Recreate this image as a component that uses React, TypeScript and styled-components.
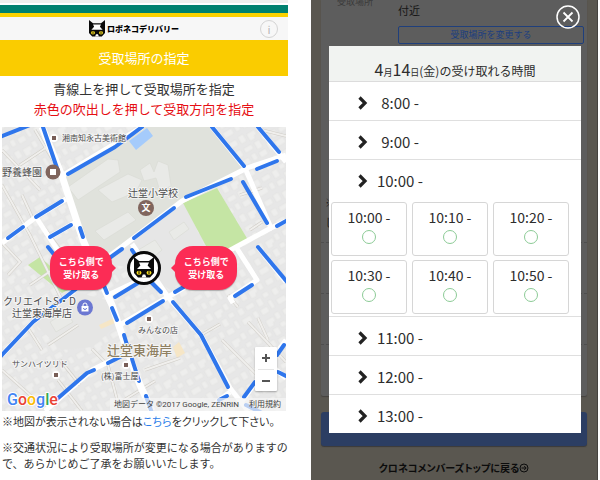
import React from "react";
import styled, { createGlobalStyle } from "styled-components";

const GlobalStyle = createGlobalStyle`
  *, *::before, *::after { box-sizing: border-box; }
  body {
    margin: 0;
    background: #fff;
    color: #333;
    font-family: "Noto Sans CJK JP", "Noto Sans", sans-serif;
  }
  button { font: inherit; color: inherit; padding: 0; margin: 0; cursor: pointer; }
  h1, h2, p, ul { margin: 0; padding: 0; font-weight: 400; }
`;

const Page = styled.main`
  display: grid;
  grid-template-columns: 288fr 287fr;
  column-gap: 23px;
  padding-right: 2px;
  min-height: 100vh;
`;

/* ---------- pick-up place screen ---------- */

const PlaceScreen = styled.section`
  min-width: 0;
`;

const Strip = styled.div<{ $color: string; $size: number }>`
  height: ${(p) => p.$size}px;
  background: ${(p) => p.$color};
`;

const BrandBar = styled.header`
  display: grid;
  grid-template-columns: 1fr auto 1fr;
  align-items: center;
  height: 23px;
  padding: 0 10px;
  background: #f7f7f7;
`;

const Brand = styled.div`
  grid-column: 2;
  display: flex;
  align-items: center;
  gap: 2px;
  padding-right: 20px;
  color: #000;
  font-size: 8px;
  font-weight: 900;
  line-height: 12px;
`;

const InfoButton = styled.button`
  justify-self: end;
  width: 18px;
  height: 18px;
  border: 1px solid #d4d4d4;
  border-radius: 50%;
  background: transparent;
  color: #b5b5b5;
  font-size: 11px;
  line-height: 14px;
`;

const ScreenTitle = styled.h1`
  background: #facc00;
  color: #fff;
  font-size: 13px;
  line-height: 36px;
  text-align: center;
`;

const Guide = styled.div`
  padding: 3px 0 8px;
  text-align: center;
  font-size: 13px;
  line-height: 20px;
`;

const GuideLine = styled.p<{ $alert?: boolean }>`
  color: ${(p) => (p.$alert ? "#e60f14" : "#333")};
`;

const MapBox = styled.div`
  position: relative;
  margin: 0 2px;
  aspect-ratio: 1;
  overflow: hidden;
  background: #e9e9e8;
`;

const MapDrawing = styled.svg`
  display: block;
  width: 100%;
  height: 100%;
`;

const Bubble = styled.button<{ $tail: "left" | "right" }>`
  position: absolute;
  top: 42%;
  left: ${(p) => (p.$tail === "right" ? "17%" : "61%")};
  width: 62px;
  height: 44px;
  border: 0;
  border-radius: 18px;
  background: #fc2c55;
  color: #fff;
  font-size: 9px;
  font-weight: 700;
  line-height: 13px;
  box-shadow: 0 1px 1px rgba(0, 0, 0, 0.25);

  &::after {
    content: "";
    position: absolute;
    top: 17px;
    ${(p) => (p.$tail === "right" ? "left: 100%;" : "right: 100%;")}
    margin: 0 -1px;
    border: 5px solid transparent;
    ${(p) =>
      p.$tail === "right"
        ? "border-left-color: #fc2c55; border-right-width: 0;"
        : "border-right-color: #fc2c55; border-left-width: 0;"}
  }
`;

const ZoomControl = styled.div`
  position: absolute;
  right: 9px;
  bottom: 20px;
  width: 22px;
  padding: 0 3px;
  border-radius: 1px;
  background: #fff;
  box-shadow: 0 1px 2px rgba(0, 0, 0, 0.3);
`;

const ZoomButton = styled.button`
  display: flex;
  align-items: center;
  justify-content: center;
  width: 100%;
  height: 22px;
  border: 0;
  background: none;

  & + & { border-top: 1px solid #e6e6e6; }
`;

const Credit = styled.div`
  position: absolute;
  right: 0;
  bottom: 0;
  display: flex;
  gap: 10px;
  padding: 0 5px 0 4px;
  background: rgba(245, 245, 245, 0.7);
  color: #444;
  font-family: Roboto, "Noto Sans CJK JP", sans-serif;
  font-size: 8px;
  line-height: 13px;
  white-space: nowrap;
`;

const CreditLink = styled.a`
  color: inherit;
  text-decoration: none;
`;

const Notes = styled.div`
  display: grid;
  gap: 10px;
  padding: 2px 0 0 2px;
  font-size: 11px;
  line-height: 16px;
  white-space: nowrap;
`;

const Note = styled.p<{ $compact?: boolean }>`
  font-feature-settings: ${(p) => (p.$compact ? '"palt"' : "normal")};
`;

const InlineLink = styled.a`
  color: #2b7de9;
  text-decoration: none;
`;

/* ---------- pick-up time screen ---------- */

const TimeScreen = styled.section`
  position: relative;
  display: flex;
  flex-direction: column;
  min-width: 0;
  padding: 0 10px 4px;
  overflow: hidden;
  background: #5a5750;
  border-right: 1px solid #45433f;
`;

const Sheet = styled.div`
  height: 396px;
  background: #5d5d5d;
  border-radius: 0 0 2px 2px;
  box-shadow: 0 1px 1px #45433f;
`;

const SheetPlace = styled.div`
  display: grid;
  grid-template-columns: 61px 1fr;
  column-gap: 16px;
  height: 192px;
  padding-right: 3px;
  align-content: start;
`;

const SheetLabel = styled.div`
  padding-left: 16px;
  color: #3a3a3a;
  font-size: 9px;
  line-height: 4px;
  white-space: nowrap;
`;

const SheetValue = styled.div`
  color: #161616;
  font-size: 11px;
  line-height: 20px;
`;

const ChangeButton = styled.button`
  display: block;
  width: 100%;
  height: 18px;
  margin-top: 6px;
  border: 1px solid #1f3f7c;
  border-radius: 2px;
  background: none;
  color: #1b3d80;
  font-size: 9px;
  line-height: 14px;
`;

const SheetRow = styled.div`
  height: 51px;
  padding-left: 4px;
  border-bottom: 1px dashed #4e4e4e;
  color: #202020;
  font-size: 11px;
  line-height: 20px;
`;

const SubmitButton = styled.button`
  height: 34px;
  margin-top: 16px;
  border: 0;
  border-radius: 3px;
  background: #2c3e63;
  color: #77756f;
  font-size: 13px;
  line-height: 20px;
  padding-bottom: 8px;
  box-shadow: 0 1px 1px #3a3a3a;
`;

const BackLink = styled.a`
  display: flex;
  align-items: center;
  justify-content: center;
  margin-top: 13px;
  color: #0c0c0c;
  font-size: 10px;
  font-weight: 700;
  line-height: 18px;
  font-feature-settings: "palt";
  text-decoration: none;
`;

const CloseButton = styled.button`
  position: absolute;
  top: 5px;
  right: 17px;
  width: 24px;
  height: 24px;
  border: 0;
  background: none;
`;

const Dialog = styled.div`
  position: absolute;
  top: 46px;
  left: 18px;
  right: 16px;
  background: #fff;
  color: #2d2d2d;
`;

const DialogTitle = styled.h2`
  display: flex;
  align-items: baseline;
  justify-content: center;
  padding: 12px 0 0;
  height: 36px;
  background: #f1f3f1;
  border-bottom: 1px solid #dcdcdc;
  font-size: 12px;
  line-height: 23px;
  white-space: nowrap;
`;

const Big = styled.span`
  font-size: 16px;
`;

const Small = styled.span`
  font-size: 9px;
`;

const HourButton = styled.button`
  display: flex;
  align-items: center;
  width: 100%;
  height: 38px;
  padding: 4px 0 0 28px;
  border: 0;
  background: none;
  font-size: 15px;
  line-height: 20px;
`;

const HourText = styled.span`
  width: 50px;
  margin-left: 6px;
  text-align: center;
`;

const Hour = styled.li`
  list-style: none;

  & + & { border-top: 1px solid #dfdfdf; }
`;

const Slots = styled.div`
  display: grid;
  grid-template-columns: repeat(3, 1fr);
  gap: 4px 5px;
  padding: 4px 12px 2px 2px;
`;

const Slot = styled.button`
  display: flex;
  flex-direction: column;
  align-items: center;
  gap: 3px;
  height: 54px;
  padding: 4px 0 0;
  border: 1px solid #d6d6d6;
  border-radius: 3px;
  background: #fff;
  font-size: 14px;
  line-height: 20px;
`;

const Free = styled.span`
  width: 14px;
  height: 14px;
  border: 1px solid #8ccb96;
  border-radius: 50%;
`;

/* ---------- drawings ---------- */

const CatFace = () => (
  <>
    <path d="M0 0L5 4H15L20 0V16L16 20.5H4L0 16Z" fill="#0a0a0a" />
    <path d="M5 5.6H15L13.6 8.4L17 12H3L6.400 8.400Z" fill="#fff" />
    <path d="M8.8 17.6H11.2L12.4 20.6H7.6Z" fill="#fff" />
    <ellipse cx="5" cy="15.8" rx="2.5" ry="2.1" fill="#f6dc1e" />
    <ellipse cx="15" cy="15.8" rx="2.5" ry="2.1" fill="#f6dc1e" />
    <path d="M5 14v3.400M15 14v3.400" stroke="#0a0a0a" strokeWidth="1" />
  </>
);

const Chevron = () => (
  <svg width="12" height="14" viewBox="0 0 12 14" aria-hidden="true">
    <path d="M2.5 1.5L8 7L2.5 12.5" fill="none" stroke="#222" strokeWidth="3.2" />
  </svg>
);

const minorRoads = [
  "M2 185L30 235L62 300", "M22 195L34 221", "M2 243L20 262L8 275", "M36 217L62 252", "M60 172L35 130",
  "M28 328L42 350", "M2 370L48 411", "M48 345L78 325", "M58 380L82 411", "M92 349L108 365L120 411",
  "M201 335L220 324", "M145 370L180 358", "M248 322L286 362", "M258 318L268 340", "M222 340L262 380",
  "M240 195L262 188", "M262 130L286 136", "M250 230L262 222", "M124 400L155 381", "M80 385L60 360",
  "M228 295L238 307", "M20 165L50 145", "M2 150L40 190", "M30 285L52 270",
];

const roads = [
  "M2 243L36 217L66 199", "M36 217L60 254", "M50 237L76 222", "M62 176L142 127", "M90 271L182 201L247 168L286 155",
  "M212 127L245 168L271 228L286 221", "M258 127L286 162", "M271 228L212 260", "M236 247L257 280L230 298L233 303",
  "M132 244L168 297L201 335L230 388L248 411", "M108 295L146 277", "M118 326L168 297L190 284",
  "M2 355L33 322L74 291", "M45 411L92 370L128 352", "M230 392L214 404", "M240 404L286 340", "M270 365L286 378",
  "M258 247L286 282",
];

const pickupLines = [
  "M0 137L30 125", "M43 127L58 171", "M68 174L115 147L142 127", "M36 217L62 201", "M8 238L23 227",
  "M50 237L71 225", "M80 228L83 237", "M48 247L56 257", "M108 259L122 249", "M134 238L174 208",
  "M132 250L138 259", "M212 127L244 166", "M258 127L279 152", "M257 169L277 161", "M186 197L231 179",
  "M243 182L267 223", "M277 226L288 220", "M258 247L288 283", "M0 357L33 322L76 289", "M103 283L107 293",
  "M115 297L138 283", "M112 308L117 320", "M127 323L163 301", "M124 335L127 345", "M108 363L124 355",
  "M132 359L139 381", "M94 370L87 373L57 399", "M146 396L152 413", "M152 283L161 292", "M175 292L187 285",
  "M173 302L201 335L228 387", "M235 296L252 285", "M244 397L255 382", "M277 355L284 345", "M278 372L288 377",
  "M219 400L227 396", "M246 405L262 413",
];

const AreaMap = () => (
  <MapDrawing viewBox="2 127 284 284" preserveAspectRatio="xMidYMid slice" role="img" aria-label="地図">
    <defs>
      <pattern id="houses" width="40" height="34" patternUnits="userSpaceOnUse" patternTransform="rotate(-31)">
        <g fill="#eeeeed" stroke="#e2e2e0" strokeWidth="0.6">
          <path d="M2 3h8v6h-8zM13 2h6v8h-6zM22 4h9v5h-3v3h-6zM33 2h5v7h-5z" />
          <path d="M3 14h6v7h-6zM12 15h9v5h-9zM24 15h6v8h-6zM33 13h6v5h-6z" />
          <path d="M2 25h10v6h-10zM15 24h5v7h-5zM23 26h8v6h-8zM34 22h4v9h-4z" />
        </g>
      </pattern>
    </defs>
    <rect x="2" y="127" width="284" height="284" fill="#e7e7e7" />
    <rect x="2" y="127" width="284" height="284" fill="url(#houses)" />
    <path d="M62 178L142 127H212L244 168L182 200L90 267Z" fill="#e0e2dc" />
    <path d="M95 262L184 202L212 262L170 290L145 270Z" fill="#e6e6e6" />
    <path d="M36 325L76 292L106 300L116 325L92 347L62 350Z" fill="#e6e6e5" />
    <g fill="#e9eae7" stroke="#d9dad4" strokeWidth="0.6">
      <path d="M68 187L108 159L118 160L120 172L78 200Z" />
      <path d="M98 190L128 174L142 180L136 192L112 202Z" />
      <path d="M95 231L128 212L136 220L104 240Z" />
      <path d="M140 170L150 163L154 172L158 161L168 165L171 186L160 191L156 178L144 181Z" />
      <path d="M169 232L184 222L189 229L174 240Z" />
      <path d="M130 255L155 240L162 250L150 260Z" />
      <path d="M50 322L66 312L73 322L56 332Z" />
    </g>
    <path d="M183 203L217 188L248 240L213 259Z" fill="#c5e5a4" />
    <path d="M28 265L40 257L74 287L62 293Z" fill="#c5e5a4" />
    <path d="M129 141L147 128L153 136L136 150Z" fill="#a5cbfb" />
    <path d="M99 325L114 318L115 323L101 329ZM173 347L179 342L185 353L177 358Z" fill="#f6e6c6" />
    <g fill="none" stroke="#cfccc5" strokeWidth="3">
      {minorRoads.map((d) => <path key={d} d={d} />)}
    </g>
    <g fill="none" stroke="#f0efed" strokeWidth="2">
      {minorRoads.map((d) => <path key={d} d={d} />)}
    </g>
    <g fill="none" stroke="#fff" strokeWidth="5" strokeLinejoin="round">
      {roads.map((d) => <path key={d} d={d} />)}
      <path d="M42 127L62 176L83 240L98 275L112 305L127 350L140 385L152 411" strokeWidth="7" />
    </g>
    <g fill="none" stroke="#2f76ec" strokeWidth="4" strokeLinecap="round" strokeLinejoin="round">
      {pickupLines.map((d) => <path key={d} d={d} />)}
    </g>

    <g fill="#fff">
      <circle cx="54" cy="138" r="4" />
      <circle cx="149" cy="319" r="4" />
      <circle cx="56" cy="375" r="4" />
      <circle cx="126" cy="365" r="4" />
    </g>
    <path d="M52 136h4v4h-4zM147 317h4v4h-4zM54 373h4v4h-4zM124 363h4v4h-4z" fill="#785e57" />
    <circle cx="53" cy="172" r="7.5" fill="#80655d" />
    <path d="M50 169h6v6h-6z" fill="#fff" />
    <circle cx="146" cy="208" r="8" fill="#80655d" />
    <circle cx="85" cy="307.5" r="8" fill="#6c78d2" />
    <path d="M81.500 306h7v5.500h-7z" fill="#fff" />
    <path d="M83 306v-1a2 2 0 0 1 4 0v1" fill="none" stroke="#fff" />
    <path d="M83.500 308a1.500 1.500 0 0 0 3 0" fill="none" stroke="#6c78d2" />

    <g fill="#4d4d4d" stroke="#f4f4f4" strokeWidth="2" paintOrder="stroke" strokeLinejoin="round" fontSize="8">
      <text x="62" y="141">湘南知永古美術館</text>
      <text x="2" y="176" fontSize="10">野養蜂園</text>
      <text x="128" y="197" fontSize="10">辻堂小学校</text>
      <text x="3" y="305" fontSize="10">クリエイトS・D</text>
      <text x="12" y="317" fontSize="10">辻堂東海岸店</text>
      <text x="12" y="367">サンハイツリド</text>
      <text x="101" y="379">(株)富士屋</text>
      <text x="138" y="333">みんなの店</text>
      <text x="107" y="355" fontSize="13" fill="#8f8062" fontWeight="500">辻堂東海岸</text>
    </g>
    <text x="146" y="211" fontSize="9" fontWeight="700" fill="#fff" textAnchor="middle">文</text>
    <text
      x="7" y="405" fontSize="16" fontWeight="500" fontFamily="Roboto, sans-serif"
      stroke="#fff" strokeWidth="2" paintOrder="stroke" strokeLinejoin="round"
    >
      <tspan fill="#4285f4">G</tspan>
      <tspan fill="#ea4335">o</tspan>
      <tspan fill="#fbbc05">o</tspan>
      <tspan fill="#4285f4">g</tspan>
      <tspan fill="#34a853">l</tspan>
      <tspan fill="#ea4335">e</tspan>
    </text>

    <circle cx="144" cy="268" r="15.500" fill="#fff" stroke="#0a0a0a" strokeWidth="3" />
    <g transform="translate(134 257)"><CatFace /></g>
  </MapDrawing>
);

const slots = ["10:00 -", "10:10 -", "10:20 -", "10:30 -", "10:40 -", "10:50 -"];
const hours = [
  { label: "8:00 -" },
  { label: "9:00 -" },
  { label: "10:00 -", slots },
  { label: "11:00 -" },
  { label: "12:00 -" },
  { label: "13:00 -" },
];

export default function App() {
  return (
    <>
      <GlobalStyle />
      <Page>
        <PlaceScreen>
          <Strip $color="#efefed" $size={3} />
          <Strip $color="#fff" $size={2} />
          <Strip $color="#00816f" $size={8} />
          <Strip $color="#fbd200" $size={4} />
          <BrandBar>
            <Brand>
              <svg width="16" height="17" viewBox="0 0 20 21" aria-hidden="true"><CatFace /></svg>
              ロボネコデリバリー
            </Brand>
            <InfoButton aria-label="情報">i</InfoButton>
          </BrandBar>
          <ScreenTitle>受取場所の指定</ScreenTitle>
          <Guide>
            <GuideLine>青線上を押して受取場所を指定</GuideLine>
            <GuideLine $alert>赤色の吹出しを押して受取方向を指定</GuideLine>
          </Guide>
          <MapBox>
            <AreaMap />
            <Bubble $tail="right">こちら側で<br />受け取る</Bubble>
            <Bubble $tail="left">こちら側で<br />受け取る</Bubble>
            <ZoomControl>
              <ZoomButton aria-label="拡大">
                <svg width="10" height="10" viewBox="0 0 10 10"><path d="M5 1v8M1 5h8" stroke="#555" strokeWidth="2" /></svg>
              </ZoomButton>
              <ZoomButton aria-label="縮小">
                <svg width="10" height="10" viewBox="0 0 10 10"><path d="M1 5h8" stroke="#555" strokeWidth="2" /></svg>
              </ZoomButton>
            </ZoomControl>
            <Credit>
              <span>地図データ ©2017 Google, ZENRIN</span>
              <CreditLink href="#terms">利用規約</CreditLink>
            </Credit>
          </MapBox>
          <Notes>
            <Note $compact>※地図が表示されない場合は<InlineLink href="#help">こちら</InlineLink>をクリックして下さい。</Note>
            <Note>※交通状況により受取場所が変更になる場合がありますの<br />で、あらかじめご了承をお願いいたします。</Note>
          </Notes>
        </PlaceScreen>

        <TimeScreen>
          <Sheet>
            <SheetPlace>
              <SheetLabel>受取場所</SheetLabel>
              <div>
                <SheetValue>付近</SheetValue>
                <ChangeButton>受取場所を変更する</ChangeButton>
              </div>
            </SheetPlace>
            <SheetRow>※<br />し</SheetRow>
            <SheetRow />
            <SheetRow />
          </Sheet>
          <SubmitButton>上記内容で受取を申し込む</SubmitButton>
          <BackLink href="#top">
            クロネコメンバーズトップに戻る
            <svg width="10" height="10" viewBox="0 0 10 10" aria-hidden="true">
              <circle cx="5" cy="5" r="4" fill="none" stroke="#0c0c0c" />
              <path d="M2.500 5h4.500M5.200 3l2 2l-2 2" fill="none" stroke="#0c0c0c" />
            </svg>
          </BackLink>

          <CloseButton aria-label="閉じる">
            <svg width="24" height="24" viewBox="0 0 24 24" fill="none" stroke="#fff">
              <circle cx="12" cy="12" r="11" strokeWidth="1.500" />
              <path d="M7.500 7.500l9 9M16.500 7.500l-9 9" strokeWidth="1.800" />
            </svg>
          </CloseButton>
          <Dialog role="dialog" aria-labelledby="dialog-title">
            <DialogTitle id="dialog-title">
              <Big>4</Big><Small>月</Small><Big>14</Big><Small>日</Small>(金)の受け取れる時間
            </DialogTitle>
            <ul>
              {hours.map((hour) => (
                <Hour key={hour.label}>
                  <HourButton aria-expanded={Boolean(hour.slots)}>
                    <Chevron />
                    <HourText>{hour.label}</HourText>
                  </HourButton>
                  {hour.slots && (
                    <Slots>
                      {hour.slots.map((slot) => (
                        <Slot key={slot}>{slot}<Free /></Slot>
                      ))}
                    </Slots>
                  )}
                </Hour>
              ))}
            </ul>
          </Dialog>
        </TimeScreen>
      </Page>
    </>
  );
}
